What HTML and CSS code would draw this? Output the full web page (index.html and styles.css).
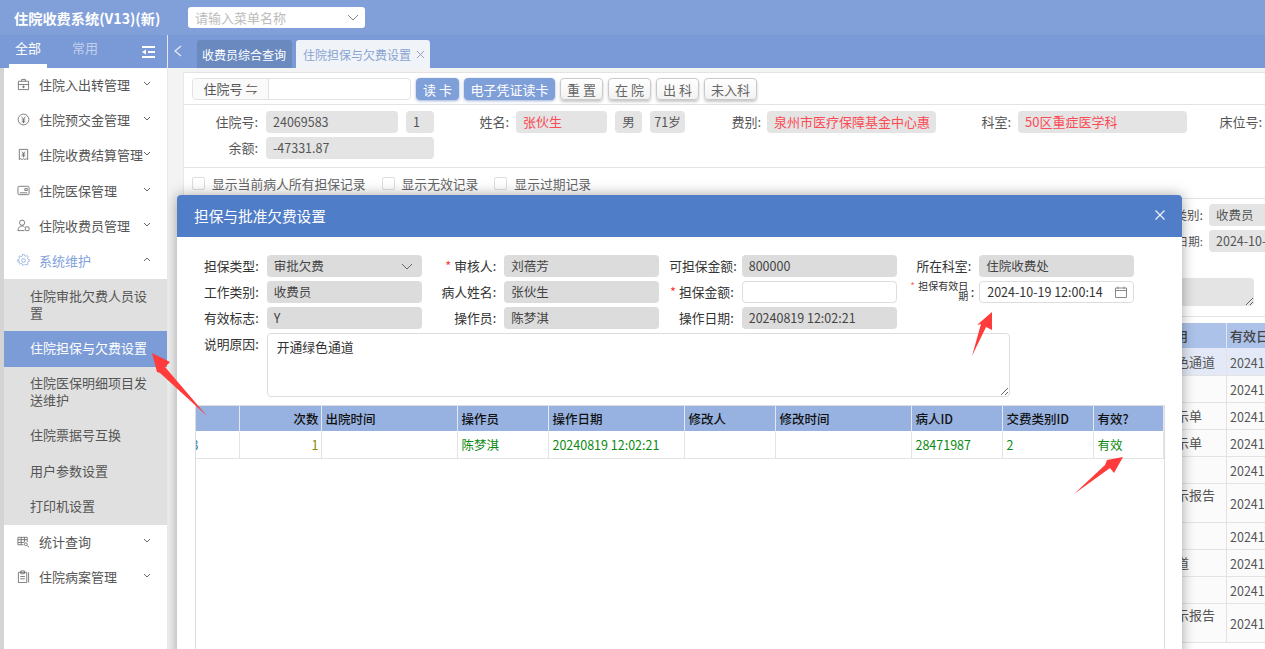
FILE: index.html
```html
<!DOCTYPE html>
<html lang="zh-CN">
<head>
<meta charset="utf-8">
<title>住院收费系统</title>
<link rel="stylesheet" href="styles.css">
</head>
<body>
<div class="app">
  <header class="topbar">
    <div class="brand">住院收费系统(V13)(新)</div>
    <div class="menu-search">
      <span>请输入菜单名称</span>
      <svg class="chev-lg" viewBox="0 0 12 7"><path d="M1 1l5 5 5-5"/></svg>
    </div>
  </header>
  <div class="body-row">
    <aside class="sidebar">
      <div class="side-tabs">
        <span class="side-tab is-active">全部</span>
        <span class="side-tab">常用</span>
        <svg class="collapse" viewBox="0 0 13 12"><path d="M0 1h13M6 6h7M0 11h13" /><path class="fill" d="M0 6l4-2.500v5z"/></svg>
      </div>
      <nav class="menu">
        <div class="menu-item"><svg class="mi" viewBox="0 0 14 14"><path d="M1.500 3.500h11v9h-11zM5 3.500V1.500h4v2M1.500 7h11M7 8v3M5.500 9.500h3"/></svg><span>住院入出转管理</span><svg class="chev" viewBox="0 0 8 5"><path d="M1 1l3 3 3-3"/></svg></div>
        <div class="menu-item"><svg class="mi" viewBox="0 0 14 14"><circle cx="7" cy="7" r="5.800"/><path d="M5 4l2 3 2-3M5 7.500h4M5 9.500h4M7 7v4"/></svg><span>住院预交金管理</span><svg class="chev" viewBox="0 0 8 5"><path d="M1 1l3 3 3-3"/></svg></div>
        <div class="menu-item"><svg class="mi" viewBox="0 0 14 14"><path d="M2.500 1.500h9v11l-1.500-1-1.500 1-1.500-1-1.500 1-1.500-1-1.500 1zM5.500 4l1.500 2 1.500-2M5 6.500h4M5 8.500h4M7 6v4"/></svg><span>住院收费结算管理</span><svg class="chev" viewBox="0 0 8 5"><path d="M1 1l3 3 3-3"/></svg></div>
        <div class="menu-item"><svg class="mi" viewBox="0 0 14 14"><rect x="1" y="2.500" width="12" height="9" rx="1.500"/><rect x="8.500" y="5" width="2.500" height="2"/><path d="M3 9.500h8"/></svg><span>住院医保管理</span><svg class="chev" viewBox="0 0 8 5"><path d="M1 1l3 3 3-3"/></svg></div>
        <div class="menu-item"><svg class="mi" viewBox="0 0 14 14"><circle cx="5.500" cy="4" r="2.800"/><path d="M1 12.500c0-3 2-5 4.500-5 1 0 2 .3 2.500 1M1 12.500h7"/><rect x="9" y="8.500" width="4" height="4" rx=".8"/></svg><span>住院收费员管理</span><svg class="chev" viewBox="0 0 8 5"><path d="M1 1l3 3 3-3"/></svg></div>
        <div class="menu-item is-open"><svg class="mi" viewBox="0 0 14 14"><circle cx="7" cy="7" r="2"/><path d="M6 1h2l.4 1.700 1.500.7 1.500-.9 1.300 1.400-.9 1.500.6 1.500 1.600.4v2l-1.600.4-.6 1.400.9 1.500-1.300 1.200-1.500-.8-1.500.6L8 14H6l-.4-1.400-1.500-.6-1.500.8-1.300-1.200.9-1.500-.6-1.400L0 9.700v-2l1.600-.4.6-1.500-.9-1.500 1.300-1.400 1.500.9 1.500-.7z" transform="translate(.7 -.6) scale(.9)"/></svg><span>系统维护</span><svg class="chev" viewBox="0 0 8 5"><path d="M1 4l3-3 3 3"/></svg></div>
        <div class="submenu">
          <div class="sub-item sub-tall">住院审批欠费人员设置</div>
          <div class="sub-item is-active">住院担保与欠费设置</div>
          <div class="sub-item sub-tall">住院医保明细项目发送维护</div>
          <div class="sub-item">住院票据号互换</div>
          <div class="sub-item">用户参数设置</div>
          <div class="sub-item">打印机设置</div>
        </div>
        <div class="menu-item"><svg class="mi" viewBox="0 0 14 14"><path d="M1 10.500v-8h10v5M1 5h10M4.500 2.500v8M8 2.500v5M1 8h7M1 10.500h6"/><circle cx="9.500" cy="10" r="1.500"/><path d="M11 11.500l2 1.500"/></svg><span>统计查询</span><svg class="chev" viewBox="0 0 8 5"><path d="M1 1l3 3 3-3"/></svg></div>
        <div class="menu-item"><svg class="mi" viewBox="0 0 14 14"><path d="M1.500 2.500h9v11h-9zM4 1h4v3H4zM3.500 7h5M3.500 9.500h5M12.500 2.500v11"/></svg><span>住院病案管理</span><svg class="chev" viewBox="0 0 8 5"><path d="M1 1l3 3 3-3"/></svg></div>
      </nav>
    </aside>

    <main class="main">
      <div class="tabbar">
        <svg class="tab-back" viewBox="0 0 8 12"><path d="M7 1L1 6l6 5"/></svg>
        <div class="tab">收费员综合查询</div>
        <div class="tab tab-active">住院担保与欠费设置<svg class="tab-close" viewBox="0 0 10 10"><path d="M1 1l8 8M9 1l-8 8"/></svg></div>
      </div>
      <div class="content">
        <section class="card">
          <div class="toolbar">
            <div class="search-group">
              <div class="search-type">住院号 <span class="swap">⇋</span></div>
              <div class="search-input"></div>
            </div>
            <button class="btn btn-primary">读 卡</button>
            <button class="btn btn-primary btn-wide">电子凭证读卡</button>
            <button class="btn">重 置</button>
            <button class="btn">在 院</button>
            <button class="btn">出 科</button>
            <button class="btn btn-three">未入科</button>
          </div>
          <div class="patient">
            <div class="patient-row">
              <label class="pl pl-first">住院号:</label><div class="pv pv-132">24069583</div><div class="pv pv-28">1</div>
              <label class="pl pl-name">姓名:</label><div class="pv pv-91 is-red">张伙生</div><div class="pv pv-27 pv-center">男</div><div class="pv pv-35 pv-center">71岁</div>
              <label class="pl pl-fee">费别:</label><div class="pv pv-169 is-red">泉州市医疗保障基金中心惠</div>
              <label class="pl pl-dept">科室:</label><div class="pv pv-169 is-red">50区重症医学科</div>
              <label class="pl pl-bed">床位号:</label>
            </div>
            <div class="patient-row">
              <label class="pl pl-first">余额:</label><div class="pv pv-168">-47331.87</div>
            </div>
          </div>
          <div class="checks">
            <label class="check"><i class="box"></i>显示当前病人所有担保记录</label>
            <label class="check"><i class="box"></i>显示无效记录</label>
            <label class="check"><i class="box"></i>显示过期记录</label>
          </div>
          <div class="filter">
            <div class="filter-row"><label class="fl">工作类别:</label><div class="pv fv">收费员</div></div>
            <div class="filter-row"><label class="fl fl-sm">有效日期:</label><div class="pv fv">2024-10-19 12:00:14</div></div>
            <textarea class="filter-note" readonly></textarea>
          </div>
          <table class="bg-table">
            <colgroup><col class="c-filler"><col class="c-note"><col class="c-date"></colgroup>
            <thead><tr><th></th><th>担保作用</th><th>有效日期</th></tr></thead>
            <tbody>
              <tr class="is-current"><td></td><td>开通绿色通道</td><td>20241019</td></tr>
              <tr><td></td><td></td><td>20241019</td></tr>
              <tr><td></td><td>检查指示单</td><td>20241019</td></tr>
              <tr><td></td><td>检查指示单</td><td>20241019</td></tr>
              <tr><td></td><td></td><td>20241019</td></tr>
              <tr><td></td><td>检查指示报告单</td><td>20241019</td></tr>
              <tr><td></td><td></td><td>20241019</td></tr>
              <tr><td></td><td>绿色通道</td><td>20241019</td></tr>
              <tr><td></td><td></td><td>20241019</td></tr>
              <tr><td></td><td>检查指示报告单</td><td>20241019</td></tr>
            </tbody>
          </table>
        </section>
      </div>

      <div class="modal">
        <div class="modal-head">
          <span>担保与批准欠费设置</span>
          <svg class="modal-close" viewBox="0 0 10 10"><path d="M.5.500l9 9M9.500.500l-9 9"/></svg>
        </div>
        <div class="modal-body">
          <div class="form-grid">
            <div class="field"><label class="ml">担保类型:</label><div class="mv mv-select">审批欠费<svg class="chev-sel" viewBox="0 0 12 7"><path d="M1 1l5 5 5-5"/></svg></div></div>
            <div class="field"><label class="ml"><em>*</em> 审核人:</label><div class="mv">刘蓓芳</div></div>
            <div class="field"><label class="ml ml-wide">可担保金额:</label><div class="mv">800000</div></div>
            <div class="field"><label class="ml">所在科室:</label><div class="mv">住院收费处</div></div>

            <div class="field"><label class="ml">工作类别:</label><div class="mv">收费员</div></div>
            <div class="field"><label class="ml">病人姓名:</label><div class="mv">张伙生</div></div>
            <div class="field"><label class="ml ml-tight"><em>*</em> 担保金额:</label><div class="mv mv-input"></div></div>
            <div class="field"><label class="ml ml-small"><span class="ml-small-text"><em>*</em> 担保有效日期</span><span class="ml-colon">:</span></label><div class="mv mv-input mv-date">2024-10-19 12:00:14<svg class="cal" viewBox="0 0 12 12"><path d="M.5 2h11v9.500H.5zM.5 4.500h11M3 .5v2.500M9 .5v2.500"/></svg></div></div>

            <div class="field"><label class="ml">有效标志:</label><div class="mv">Y</div></div>
            <div class="field"><label class="ml">操作员:</label><div class="mv">陈梦淇</div></div>
            <div class="field"><label class="ml ml-tight">操作日期:</label><div class="mv">20240819 12:02:21</div></div>
            <div class="field"></div>
          </div>
          <div class="reason">
            <label class="ml">说明原因:</label>
            <textarea class="reason-text" readonly>开通绿色通道</textarea>
          </div>
          <div class="grid-wrap">
            <table class="grid">
              <colgroup>
                <col class="g1"><col class="g2"><col class="g3"><col class="g4"><col class="g5"><col class="g6"><col class="g7"><col class="g8"><col class="g9"><col class="g10">
              </colgroup>
              <thead>
                <tr><th></th><th class="num">次数</th><th>出院时间</th><th>操作员</th><th>操作日期</th><th>修改人</th><th>修改时间</th><th>病人ID</th><th>交费类别ID</th><th>有效?</th></tr>
              </thead>
              <tbody>
                <tr><td class="clip">24069583</td><td class="num is-olive">1</td><td></td><td>陈梦淇</td><td>20240819 12:02:21</td><td></td><td></td><td>28471987</td><td>2</td><td>有效</td></tr>
              </tbody>
            </table>
          </div>
        </div>
      </div>
    </main>
  </div>
</div>

<svg class="annotations" viewBox="0 0 1265 649">
  <polygon points="152,353 170,362 165,367 207,416 160,373 157,372"/>
  <polygon points="992,312 992,330 986,327 972,356 981,324 977,325"/>
  <polygon points="1123,457 1114,473 1110,468 1074,494 1105,465 1107,460"/>
</svg>
</body>
</html>
```

FILE: styles.css
```css
* { box-sizing: border-box; }
html, body { margin: 0; height: 100%; overflow: hidden; }
body {
  background: #d4d4d4;
  color: #555;
  font-family: "Noto Sans CJK SC", "Noto Sans", sans-serif;
  font-size: 13px;
}
.app { display: flex; flex-direction: column; height: 100vh; padding-left: 4px; position: relative; }

/* top bar */
.topbar {
  flex: none; height: 35px; margin-left: -4px; padding-left: 14px;
  display: flex; align-items: center;
  background: #81a0da;
}
.brand { width: 174px; color: #fff; font-size: 14.200px; font-weight: 700; white-space: nowrap; }
.menu-search {
  width: 177px; height: 21px; padding: 0 6px 0 7px; margin-top: -1px;
  display: flex; align-items: center; justify-content: space-between;
  background: #fff; border-radius: 3px; color: #bcbcbc; font-size: 13px;
}
.chev-lg { width: 12px; height: 7px; fill: none; stroke: #888; stroke-width: 1; }

.body-row { flex: 1; display: flex; min-height: 0; }

/* sidebar */
.sidebar { flex: none; width: 163px; background: #fff; display: flex; flex-direction: column; }
.side-tabs {
  flex: none; height: 33px; margin-left: -4px; padding-left: 9px; position: relative;
  display: flex; background: #7a9ad7;
}
.side-tab { width: 38px; margin-right: 19px; padding-top: 3px; text-align: center; color: #c2d0ec; font-size: 13px; line-height: 20px; position: relative; }
.side-tab.is-active { color: #fff; }
.side-tab.is-active::after { content: ""; position: absolute; left: 0; right: 0; bottom: 0; height: 4px; background: #fff; }
.collapse { position: absolute; left: 142px; top: 11px; width: 13px; height: 12px; fill: none; stroke: #fff; stroke-width: 2; }
.collapse .fill { fill: #fff; stroke: none; }

.menu-item {
  height: 35.200px; padding: 0 0 2px 13px;
  display: flex; align-items: center;
  color: #555; font-size: 13px; position: relative;
}
.mi { flex: none; width: 13px; height: 13px; margin-right: 9px; fill: none; stroke: #666; stroke-width: .9; }
.chev { position: absolute; left: 139px; top: 13px; width: 8px; height: 5px; fill: none; stroke: #666; stroke-width: 1; }
.menu-item.is-open { color: #7f9fdc; }
.menu-item.is-open .mi { stroke: #8aa5d8; }
.submenu { background: #e0e0e0; }
.sub-item { height: 35.500px; padding: 0 16px 2px 26px; display: flex; align-items: center; line-height: 17px; color: #555; }
.sub-tall { height: 51.500px; }
.sub-item.is-active { height: 36px; background: #7b9cd6; color: #fff; }

/* main */
.main { flex: 1; min-width: 0; position: relative; overflow: hidden; display: flex; flex-direction: column; border-left: 1px solid #e8e8e8; }
.tabbar { flex: none; height: 33px; background: #7a9ad7; display: flex; align-items: flex-end; padding-left: 6px; }
.tab-back { width: 8px; height: 12px; margin: 0 15px 11px 0; fill: none; stroke: #e8eefa; stroke-width: 1.200; }
.tab { height: 28px; width: 95px; margin-right: 4px; padding-left: 5px; display: flex; align-items: center; background: #6a8abf; color: #fff; font-size: 12px; border-radius: 3px 3px 0 0; white-space: nowrap; }
.tab-active { width: 134px; padding-left: 7px; background: #f0f3f8; color: #89a3d2; }
.tab-close { width: 9px; height: 9px; margin-left: 5px; fill: none; stroke: #8a9ab8; stroke-width: 1; }

.content { flex: 1; min-height: 0; padding: 4px 0 0 15px; background: #f3f3f3; }
.card { height: 100%; background: #fff; border-top: 1px solid #e3e3e3; border-left: 1px solid #e8e8e8; }

.toolbar { height: 32px; padding: 5px 0 0 8px; display: flex; border-bottom: 1px solid #e3e3e3; align-items: flex-start; }
.search-group { width: 219px; height: 22px; display: flex; border: 1px solid #e2e2e2; border-radius: 4px; }
.search-type { width: 76px; background: #fafafa; border-right: 1px solid #e2e2e2; color: #555; line-height: 20px; text-align: center; font-size: 13px; border-radius: 4px 0 0 4px; white-space: nowrap; }
.search-input { flex: 1; }
.swap { font-size: 12px; }
.btn {
  width: 43px; height: 22px; padding: 0; margin-left: 5px;
  font: 13px "Noto Sans CJK SC", sans-serif; color: #666; white-space: nowrap;
  background: linear-gradient(#fff, #f2f2f2); border: 1px solid #c9c9c9; border-radius: 4px;
  box-shadow: 0 2px 3px rgba(0,0,0,.22);
}
.btn-primary { background: #7f9fd9; border-color: #7f9fd9; color: #fff; box-shadow: 0 1px 3px rgba(60,100,180,.5); }
.btn-wide { width: 91px; }
.btn-three { width: 53px; }

.patient { height: 63px; padding-top: 6px; border-bottom: 1px solid #e3e3e3; }
.patient-row { display: flex; height: 22px; margin-bottom: 4px; white-space: nowrap; }
.pl { color: #555; font-size: 13px; line-height: 22px; text-align: right; flex: none; }
.pl-first { width: 74px; margin-right: 8px; }
.pl-name { width: 75px; margin-right: 7px; }
.pl-fee { width: 76px; margin-right: 6px; }
.pl-dept { width: 75px; margin-right: 7px; }
.pl-bed { width: 75px; }
.pv { flex: none; height: 22px; padding: 0 7px; background: #e4e4e4; border-radius: 4px; color: #555; font-size: 12.500px; line-height: 22px; overflow: hidden; white-space: nowrap; }
.pv-center { padding: 0; text-align: center; margin-left: 8px; }
.pv-132 { width: 132px; }
.pv-28 { width: 28px; margin-left: 8px; }
.pv-91 { width: 91px; }
.pv-27 { width: 27px; }
.pv-35 { width: 35px; }
.pv-168 { width: 168px; }
.pv-169 { width: 169px; }
.pv.is-red { color: #fb4b55; font-size: 13px; }

.checks { height: 31px; padding-left: 8px; display: flex; align-items: center; color: #666; font-size: 12.800px; border-bottom: 1px solid #e3e3e3; }
.check { display: flex; align-items: center; margin-right: 16px; }
.box { width: 13px; height: 13px; margin-right: 7px; border: 1px solid #ddd; border-radius: 2px; background: #fff; }

.filter { height: 118px; padding-top: 5px; border-bottom: 1px solid #e3e3e3; }
.filter-row { display: flex; height: 22px; margin-bottom: 4px; padding-left: 924px; }
.fl { width: 95px; margin-right: 6px; text-align: right; color: #555; font-size: 12.500px; line-height: 22px; flex: none; }
.fl-sm { font-size: 11.500px; }
.fv { width: 120px; }
.filter-note { display: block; width: 1070px; height: 28px; margin-top: 26px; background: #e4e4e4; border: 0; border-radius: 4px; }

.bg-table { margin-top: 6px; width: 1144px; border-collapse: collapse; table-layout: fixed; font-size: 13px; color: #555; }
.c-filler { width: 948px; }
.c-note { width: 94px; }
.c-date { width: 102px; }
.bg-table th { height: 25px; background: #adc2e8; font-weight: 500; text-align: left; padding: 0 3px; color: #444; border-left: 1px solid #dfe5f2; white-space: nowrap; }
.bg-table td { height: 27px; padding: 3px 3px 1px; line-height: 17px; background: #fbfbfb; border-bottom: 1px solid #e3e3e3; border-left: 1px solid #e3e3e3; vertical-align: middle; }
.bg-table td:nth-child(2) { padding: 2px 4px; }
.bg-table td:nth-child(3) { overflow: hidden; white-space: nowrap; font-size: 12.500px; }
.bg-table .is-current td { background: #e3e9f6; }

/* modal */
.modal {
  position: absolute; left: 9px; top: 160px; width: 1005px; height: 600px;
  background: #fff; border-radius: 4px 4px 0 0; box-shadow: 0 0 14px rgba(0,0,0,.35);
}
.modal-head {
  height: 42px; padding: 0 17px 2px 17px; display: flex; align-items: center; justify-content: space-between;
  background: #4f7dc8; color: #fff; font-size: 14.670px; border-radius: 4px 4px 0 0;
}
.modal-close { width: 10px; height: 10px; fill: none; stroke: #eef2fb; stroke-width: 1.200; }
.modal-body { padding: 18px 3px 0 14.700px; }
.form-grid { display: grid; grid-template-columns: repeat(4, 237.500px); grid-auto-rows: 22px; row-gap: 4px; }
.field { display: flex; }
.ml { flex: none; width: 75px; padding-right: 8px; text-align: right; color: #333; font-size: 12.800px; line-height: 22px; white-space: nowrap; display: flex; justify-content: flex-end; }
.ml em { color: #f33; font-style: normal; margin-right: 3px; }
.ml-wide { padding-right: 5px; }
.ml-small { position: relative; padding-right: 0; }
.ml-small-text { display: block; position: absolute; right: 11px; top: 0; width: 60px; font-size: 10px; line-height: 10px; white-space: normal; text-align: right; color: #333; }
.ml-small-text em { margin-right: 1px; color: #f66; }
.ml-colon { position: absolute; right: 5px; top: 0; }
.mv { flex: none; width: 155px; height: 22px; padding: 0 7px; background: #dcdcdc; border-radius: 4px; color: #444; font-size: 12.500px; line-height: 22px; display: flex; align-items: center; justify-content: space-between; white-space: nowrap; }
.mv-input { background: #fff; border: 1px solid #ddd; color: #333; padding: 0 6px 0 7px; }
.chev-sel { width: 12px; height: 7px; margin-right: 2px; fill: none; stroke: #666; stroke-width: 1; }
.cal { width: 12px; height: 12px; fill: none; stroke: #888; stroke-width: 1; }
.reason { display: flex; margin-top: 4px; }
.reason-text {
  width: 743px; height: 64px; padding: 4px 9px; margin: 0; resize: both; outline: 0;
  background: #fff; border: 1px solid #ddd; border-radius: 4px; color: #333;
  font: 12.800px/18px "Noto Sans CJK SC", sans-serif;
}
.grid-wrap { margin-top: 8px; width: 970px; height: 300px; margin-left: 3.300px; border: 1px solid #ddd; border-bottom: 0; overflow: hidden; }
.grid { width: 968px; border-collapse: collapse; table-layout: fixed; font-size: 12.500px; }
.g1 { width: 44px; } .g2 { width: 82px; } .g3 { width: 136px; } .g4 { width: 91px; } .g5 { width: 136px; }
.g6 { width: 91px; } .g7 { width: 136px; } .g8 { width: 91px; } .g9 { width: 91px; } .g10 { width: 70px; }
.grid th { height: 25px; padding: 0 3px; background: #97b2e0; color: #111; font-weight: 500; text-align: left; border-right: 1px solid #e4e8f0; white-space: nowrap; }
.grid td { height: 27px; padding: 0 3px; color: #0b8a12; border-right: 1px solid #e3e3e3; border-bottom: 1px solid #e3e3e3; border-top: 1px solid #fff; white-space: nowrap; overflow: hidden; }
.grid .num { text-align: right; }
.grid .is-olive { color: #8a8a00; }
.grid .clip { text-indent: -56px; color: #3a7fa0; }

/* drawn-on annotations over the screenshot */
.annotations { position: fixed; left: 0; top: 0; width: 1265px; height: 649px; pointer-events: none; }
.annotations polygon { fill: #ff3b3b; }
```
